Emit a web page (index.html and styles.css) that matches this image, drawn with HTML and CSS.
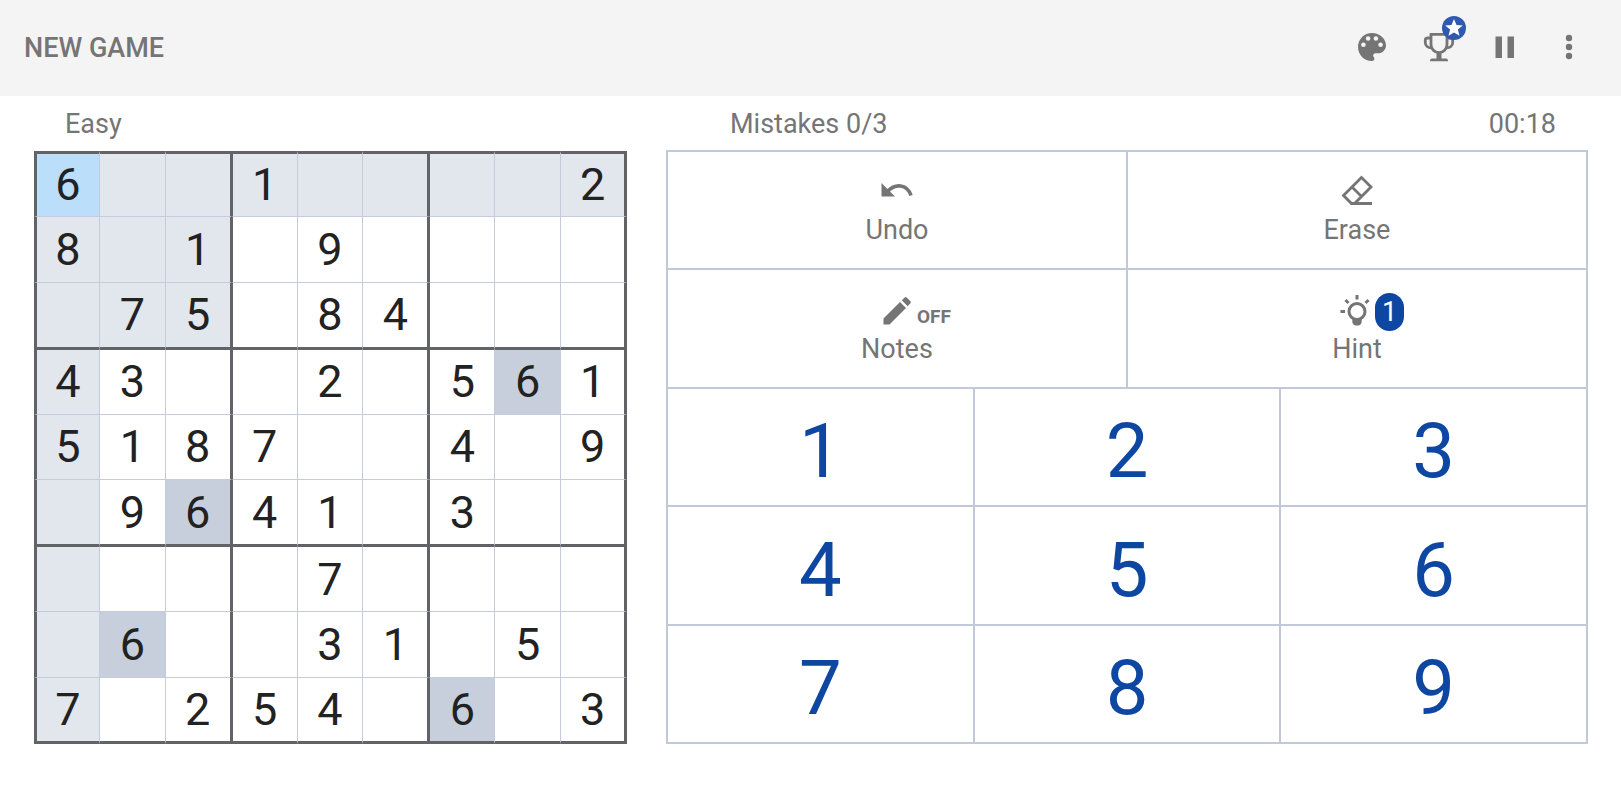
FILE: index.html
```html
<!DOCTYPE html>
<html lang="en">
<head>
    <meta charset="UTF-8">
    <meta name="viewport" content="width=device-width, initial-scale=1.0">
    <title>Sudoku</title>
    <link rel="stylesheet" href="styles.css">
</head>
<body>
    <header class="toolbar">
        <button class="new-game">NEW GAME</button>
        <div class="toolbar-actions">
            <button class="icon-button" aria-label="Themes">
                <svg class="icon" viewBox="-1 0 36 36"><path fill-rule="evenodd" d="M18 4C10.200 4 4 10.200 4 18s6.200 14 14 14c1.400 0 2.400-1 2.400-2.300 0-.6-.3-1.200-.7-1.600-.3-.4-.6-.9-.6-1.500 0-1.300 1-2.300 2.300-2.300h2.800c4.300 0 7.800-3.500 7.800-7.800C32 9.600 25.700 4 18 4zM9.400 18a2.300 2.300 0 1 1 0-4.600 2.300 2.300 0 0 1 0 4.600zm4.700-6.200a2.300 2.300 0 1 1 0-4.600 2.300 2.300 0 0 1 0 4.600zm7.800 0a2.300 2.300 0 1 1 0-4.600 2.300 2.300 0 0 1 0 4.600zm4.700 6.200a2.300 2.300 0 1 1 0-4.600 2.300 2.300 0 0 1 0 4.600z"/></svg>
            </button>
            <button class="icon-button" aria-label="Awards">
                <svg class="icon" viewBox="-2 0 36 36"><g fill="none" stroke="currentColor" stroke-width="2.800"><path d="M10 5.300h16v10.200c0 4.500-3.500 8.200-8 8.200s-8-3.700-8-8.200z"/><path d="M10 9H6.800C5 9 4.300 9.700 4.300 11.300v2.200c0 3.400 2.700 5.300 6.200 5.300M26 9h3.200c1.800 0 2.500.7 2.500 2.300v2.200c0 3.400-2.700 5.300-6.200 5.300"/></g><path d="M15.500 24h5v5.500h4.500c1.300 0 2 .8 2 2.700H9c0-1.900.7-2.700 2-2.700h4.500z"/></svg>
                <svg class="award-badge" viewBox="0 0 24 24"><circle cx="12" cy="12" r="12" fill="#2f59b1"/><path fill="#fff" d="M12 3l2.500 6 6.300.4-4.900 4.100 1.600 6.300-5.500-3.400-5.500 3.400 1.600-6.300-4.900-4.100 6.300-.4z"/></svg>
            </button>
            <button class="icon-button" aria-label="Pause">
                <svg class="icon" viewBox="0 0 36 36"><path d="M10.500 7.500h6.500v21.500h-6.500zM22.500 7.500H29v21.500h-6.500z"/></svg>
            </button>
            <button class="icon-button" aria-label="More options">
                <svg class="icon" viewBox="0 0 36 36"><circle cx="18" cy="9" r="3.200"/><circle cx="18" cy="18" r="3.200"/><circle cx="18" cy="27" r="3.200"/></svg>
            </button>
        </div>
    </header>

    <main class="game">
        <section class="board-panel">
            <div class="status">
                <span>Easy</span>
            </div>
            <div class="board" id="board"></div>
        </section>

        <section class="control-panel">
            <div class="status">
                <span>Mistakes 0/3</span>
                <span>00:18</span>
            </div>
            <div class="controls">
                <button class="tool">
                    <span class="tool-icon">
                        <svg class="icon" viewBox="0 0 36 36"><path d="M2.500 9v13.500H16z"/><path d="M8.500 17.500C16 9.500 28 9.500 32 21.500" fill="none" stroke="currentColor" stroke-width="3.600"/></svg>
                    </span>
                    Undo
                </button>
                <button class="tool">
                    <span class="tool-icon">
                        <svg class="icon" viewBox="0 0 36 36"><path d="M4.500 21.500L22.500 3.500l9.500 9.500L15.500 29.500h-3zM13 13l9.500 9.500M11.500 29.500H33" fill="none" stroke="currentColor" stroke-width="2.800"/></svg>
                    </span>
                    Erase
                </button>
                <button class="tool">
                    <span class="tool-icon">
                        <svg class="icon" viewBox="0 0 36 36"><path d="M4.500 25.500V31.500h6L27 15l-6-6zM31.200 10.500c.8-.8.800-1.700 0-2.500l-3.300-3.300c-.8-.8-1.700-.8-2.500 0L22.800 7.300l5.900 5.900z"/></svg>
                        <span class="notes-state">OFF</span>
                    </span>
                    Notes
                </button>
                <button class="tool">
                    <span class="tool-icon">
                        <svg class="icon" viewBox="0 0 36 36"><circle cx="18" cy="18.500" r="8" fill="none" stroke="currentColor" stroke-width="3"/><path d="M13.300 25h9.400v3.500c0 2.300-1.500 4-3.700 4h-2c-2.200 0-3.700-1.700-3.700-4z"/><path d="M18 2v4.500M1.500 18.500H6M6.500 7l3 3M29.500 7l-3 3" fill="none" stroke="currentColor" stroke-width="3"/></svg>
                        <span class="hint-count">1</span>
                    </span>
                    Hint
                </button>
                <button class="number">1</button>
                <button class="number">2</button>
                <button class="number">3</button>
                <button class="number">4</button>
                <button class="number">5</button>
                <button class="number">6</button>
                <button class="number">7</button>
                <button class="number">8</button>
                <button class="number">9</button>
            </div>
        </section>
    </main>

    <script>
        const puzzle = [
            '6..1....2',
            '8.1.9....',
            '.75.84...',
            '43..2.561',
            '5187..4.9',
            '.9641.3..',
            '....7....',
            '.6..31.5.',
            '7.254.6.3'
        ];

        const boardElement = document.getElementById('board');
        let selected = [0, 0];

        function sameBox(row, col) {
            return Math.floor(row / 3) === Math.floor(selected[0] / 3) &&
                Math.floor(col / 3) === Math.floor(selected[1] / 3);
        }

        function drawBoard() {
            const selectedValue = puzzle[selected[0]][selected[1]];
            boardElement.innerHTML = '';

            for (let row = 0; row < 9; row++) {
                for (let col = 0; col < 9; col++) {
                    const value = puzzle[row][col];
                    const cell = document.createElement('button');
                    cell.className = 'cell';

                    if (row === selected[0] && col === selected[1]) {
                        cell.classList.add('selected');
                    } else if (value !== '.' && value === selectedValue) {
                        cell.classList.add('same-number');
                    } else if (row === selected[0] || col === selected[1] || sameBox(row, col)) {
                        cell.classList.add('related');
                    }

                    // Thick lines around the board and each 3x3 box
                    if (col === 0) cell.classList.add('edge-left');
                    if (col === 8) cell.classList.add('edge-right');
                    if (row === 0) cell.classList.add('edge-top');
                    if (row === 8) cell.classList.add('edge-bottom');
                    if (col === 2 || col === 5) cell.classList.add('box-right');
                    if (col === 3 || col === 6) cell.classList.add('box-left');
                    if (row === 2 || row === 5) cell.classList.add('box-bottom');
                    if (row === 3 || row === 6) cell.classList.add('box-top');

                    cell.textContent = value === '.' ? '' : value;
                    cell.setAttribute('aria-label', `Row ${row + 1}, column ${col + 1}: ${value === '.' ? 'empty' : value}`);
                    cell.addEventListener('click', function() {
                        selected = [row, col];
                        drawBoard();
                    });
                    boardElement.appendChild(cell);
                }
            }
        }

        drawBoard();
    </script>
</body>
</html>
```
FILE: styles.css
```css
* {
    box-sizing: border-box;
}

body {
    margin: 0;
    font-family: Roboto, sans-serif;
    font-size: 27px;
    color: #757575;
    background-color: #ffffff;
}

button {
    margin: 0;
    padding: 0;
    border: none;
    font: inherit;
    color: inherit;
    background: none;
    cursor: pointer;
}

.toolbar {
    display: flex;
    justify-content: space-between;
    align-items: center;
    height: 96px;
    padding: 0 34px 0 24px;
    background-color: #f4f4f4;
}

.new-game {
    font-weight: 500;
    line-height: 32px;
}

.toolbar-actions {
    display: flex;
    gap: 30px;
}

.icon-button {
    position: relative;
    display: flex;
    padding-bottom: 2px;
}

.icon {
    width: 36px;
    height: 36px;
    fill: currentColor;
}

.award-badge {
    position: absolute;
    top: -13px;
    right: -11px;
    width: 24px;
    height: 24px;
}

.game {
    display: flex;
    gap: 39px;
    padding: 0 33px 0 34px;
}

/* The board stays square and fills the height under the toolbar */
.board-panel {
    flex: none;
    width: calc(100vh - 201px);
    min-width: 360px;
}

.control-panel {
    flex: 1;
    display: flex;
    flex-direction: column;
}

.status {
    display: flex;
    justify-content: space-between;
    height: 54px;
    padding: 0 32px;
    line-height: 56px;
}

.board-panel .status {
    height: 55px;
    padding-left: 31px;
}

.control-panel .status {
    padding-left: 64px;
}

.board {
    display: grid;
    grid-template-columns: repeat(9, minmax(0, 1fr));
    grid-template-rows: repeat(9, minmax(0, 1fr));
    aspect-ratio: 1;
}

.cell {
    border: 0 solid #c5cbdc;
    border-right-width: 1px;
    border-bottom-width: 1px;
    padding-top: 1px;
    font-size: 45px;
    line-height: 48px;
    color: #222222;
}

.related {
    background-color: #e2e6ed;
}

.same-number {
    background-color: #c7cfdd;
}

.selected {
    background-color: #bbdefb;
}

.edge-left {
    border-left: 3px solid #626366;
}

.edge-right {
    border-right: 3px solid #626366;
}

.edge-top {
    border-top: 3px solid #626366;
}

.edge-bottom {
    border-bottom: 3px solid #626366;
}

.box-right {
    border-right: 2px solid #626366;
}

.box-left {
    border-left: 1px solid #626366;
}

.box-bottom {
    border-bottom: 2px solid #626366;
}

.box-top {
    border-top: 1px solid #626366;
}

.controls {
    flex: 1;
    display: grid;
    grid-template-columns: repeat(6, 1fr);
    grid-template-rows: repeat(5, 1fr);
    gap: 2px;
    border: 2px solid #c1c8d8;
    background-color: #c1c8d8;
}

.tool {
    grid-column: span 3;
    display: flex;
    flex-direction: column;
    justify-content: center;
    align-items: center;
    gap: 4px;
    line-height: 32px;
    background-color: #ffffff;
}

.tool-icon {
    position: relative;
    display: flex;
}

.notes-state {
    position: absolute;
    left: 100%;
    bottom: 0;
    padding-left: 2px;
    font-size: 19px;
    font-weight: 700;
    line-height: 24px;
}

.hint-count {
    position: absolute;
    left: 100%;
    top: 0;
    width: 29px;
    border-radius: 15px;
    line-height: 38px;
    color: #ffffff;
    background-color: #0d47a1;
}

.number {
    grid-column: span 2;
    padding-top: 9px;
    font-size: 76px;
    line-height: 80px;
    color: #0d47a1;
    background-color: #ffffff;
}
```
